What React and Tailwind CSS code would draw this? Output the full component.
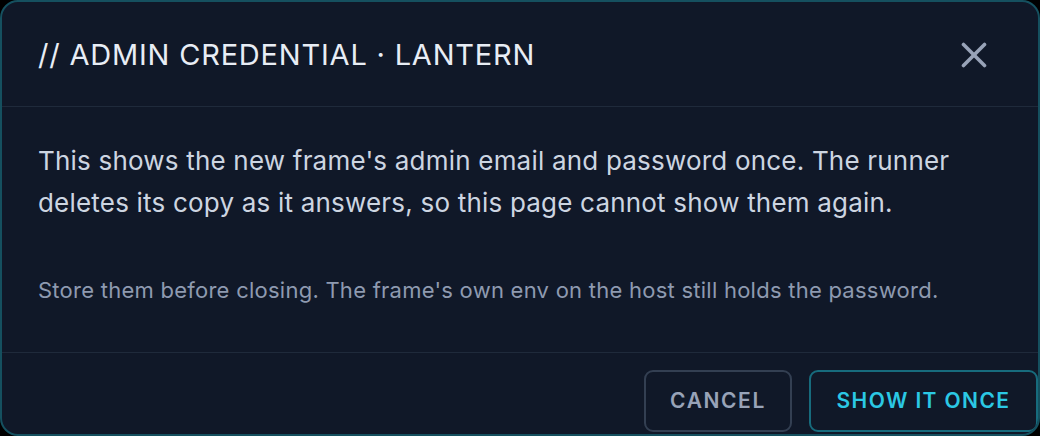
import React from 'react'

const CloseIcon = () => (
  <svg width="26" height="26" viewBox="0 0 26 26" fill="none" stroke="currentColor" strokeWidth="3.6" strokeLinecap="round">
    <path d="M2.5 2.5 L23.5 23.5" />
    <path d="M23.5 2.5 L2.5 23.5" />
  </svg>
)

const App = () => {
  return (
    <div className="w-[1040px] h-[436px] bg-black font-['Inter','Noto_Sans',sans-serif]">
      <div className="w-full h-full flex flex-col bg-[#101828] border-2 border-[#15505f] rounded-[18px] overflow-hidden">
        {/* Header */}
        <div className="h-[105px] shrink-0 flex items-center justify-between pl-[36px] pr-[51px] border-b border-[#1f2a3b]">
          <h2 className="text-[29px] leading-[36px] pt-[2px] text-[#e8edf5] tracking-[0.8px]">// ADMIN CREDENTIAL · LANTERN</h2>
          <button className="text-[#98a3b8] pt-[2px]">
            <CloseIcon />
          </button>
        </div>

        {/* Body */}
        <div className="flex-1 pl-[36px] pr-[36px] pt-[33px]">
          <p className="text-[26px] leading-[42px] text-[#cdd5e1] tracking-[0.2px]">
            This shows the new frame's admin email and password once. The runner deletes its copy as it answers, so this page cannot show them again.
          </p>
          <p className="mt-[51px] text-[22px] leading-[30px] text-[#8e9ab0] tracking-[0.25px]">
            Store them before closing. The frame's own env on the host still holds the password.
          </p>
        </div>

        {/* Footer */}
        <div className="shrink-0 h-[82px] border-t border-[#1f2a3b] flex justify-end items-start gap-[17px] pt-[17px] pr-[0px]">
          <button className="w-[148px] h-[62px] rounded-[9px] border-2 border-[#333f52] text-[#98a3b8] text-[21px] font-semibold tracking-[1.6px]">
            CANCEL
          </button>
          <button className="w-[229px] h-[62px] rounded-[9px] border-2 border-[#176b7d] text-[#2bc8e4] text-[21px] font-semibold tracking-[1.4px]">
            SHOW IT ONCE
          </button>
        </div>
      </div>
    </div>
  )
}

export default App
